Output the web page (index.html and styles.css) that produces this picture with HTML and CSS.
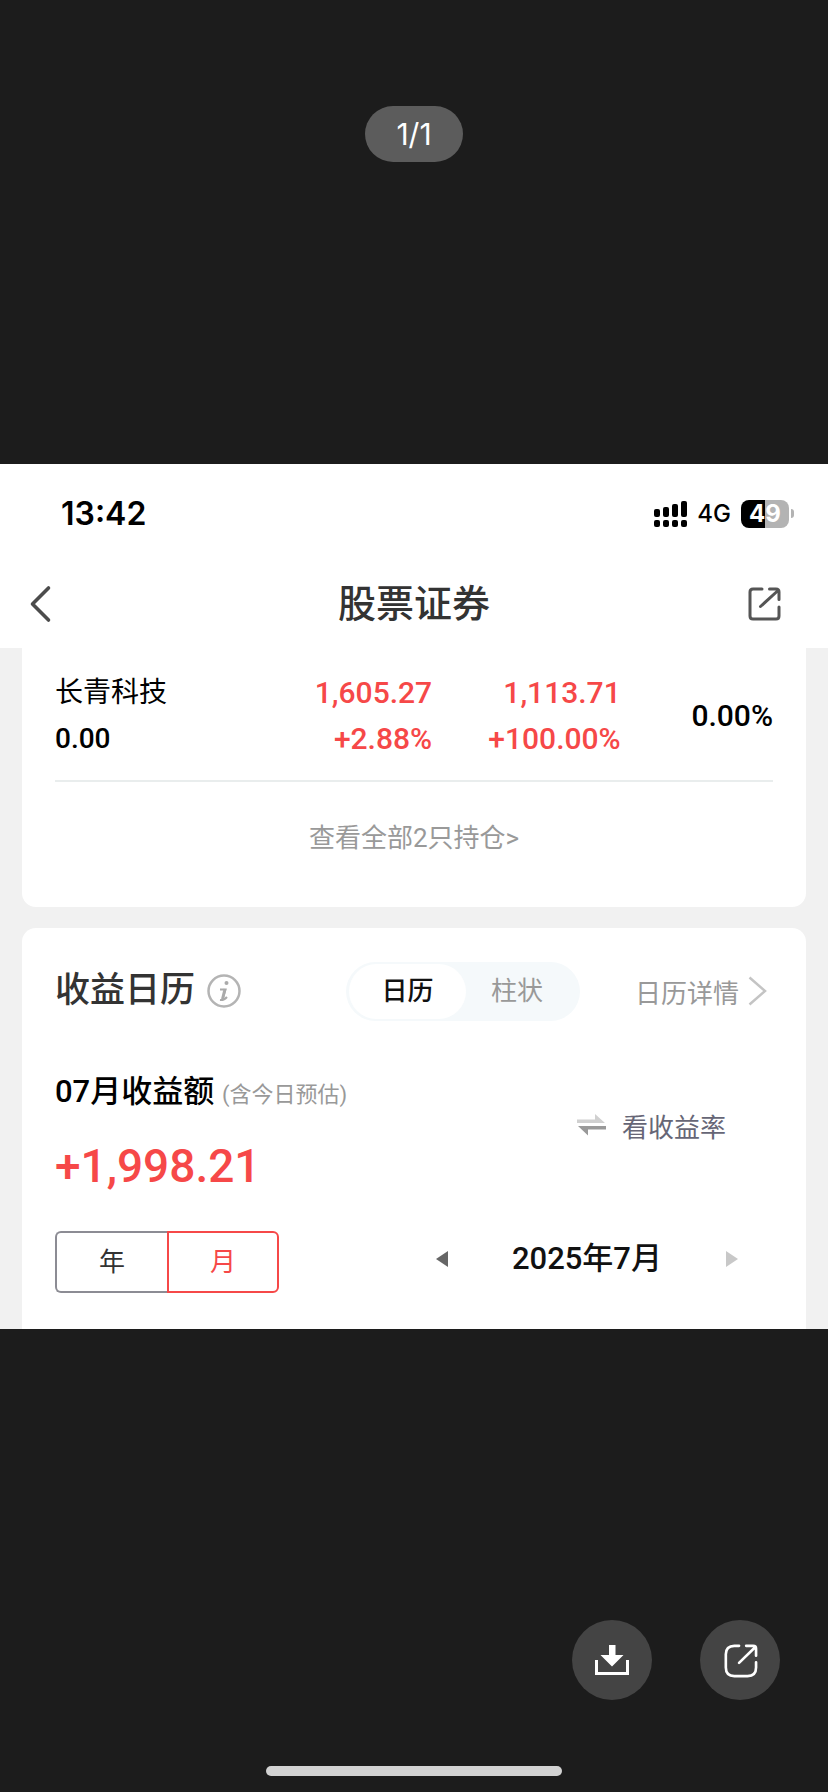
FILE: index.html
```html
<!DOCTYPE html>
<html lang="zh-CN">
    <head>
        <meta charset="utf-8">
        <meta name="viewport" content="width=device-width, initial-scale=1">
        <title>股票证券</title>
        <link rel="stylesheet" href="styles.css">
    </head>
    <body>
        <div class="viewer">
            <div class="viewer-top">
                <span class="counter">1/1</span>
            </div>

            <main class="photo">
                <div class="status-bar">
                    <span class="time">13:42</span>
                    <svg class="signal" width="33" height="28" viewBox="0 0 33 28">
                        <rect x="0" y="9" width="6" height="8" rx="2"/>
                        <rect x="9" y="7" width="6" height="10" rx="2"/>
                        <rect x="18" y="4" width="6" height="13" rx="2"/>
                        <rect x="27" y="1" width="6" height="16" rx="2"/>
                        <rect x="0" y="20" width="6" height="7" rx="2"/>
                        <rect x="9" y="20" width="6" height="7" rx="2"/>
                        <rect x="18" y="20" width="6" height="7" rx="2"/>
                        <rect x="27" y="20" width="6" height="7" rx="2"/>
                    </svg>
                    <span class="network">4G</span>
                    <span class="battery">49</span>
                    <span class="battery-tip"></span>
                </div>

                <header class="nav-bar">
                    <button class="back" aria-label="返回">
                        <svg width="21" height="36" viewBox="0 0 21 36"><path d="M18.500 2L2.500 18L18.500 34" fill="none" stroke="#4c4c4c" stroke-width="3.600" stroke-linecap="round" stroke-linejoin="round"/></svg>
                    </button>
                    <h1>股票证券</h1>
                    <button class="share" aria-label="分享">
                        <svg width="33" height="34" viewBox="0 0 33 34" fill="none" stroke="#555" stroke-width="3" stroke-linecap="round" stroke-linejoin="round">
                            <path d="M14 2H5Q2 2 2 5V29Q2 32 5 32H28Q31 32 31 29V20"/>
                            <path d="M21.500 2H28Q31 2 31 5V12.500M29.500 4L12.500 19.500"/>
                        </svg>
                    </button>
                </header>

                <div class="content">
                    <section class="card holdings">
                        <table>
                            <tr>
                                <td class="stock">长青科技<br><span class="amount">0.00</span></td>
                                <td class="up">1,605.27<br>+2.88%</td>
                                <td class="up">1,113.71<br>+100.00%</td>
                                <td>0.00%</td>
                            </tr>
                        </table>
                        <a class="view-all" href="#">查看全部2只持仓&gt;</a>
                    </section>

                    <section class="card calendar">
                        <div class="card-head">
                            <h2>收益日历</h2>
                            <button aria-label="说明">
                                <svg width="34" height="34" viewBox="0 0 34 34">
                                    <circle cx="17" cy="17" r="15.500" fill="none" stroke="#b4b4b4" stroke-width="2.500"/>
                                    <circle cx="19.500" cy="9" r="2" fill="#aaa"/>
                                    <path d="M13 15.500H18.500L15.500 25.500M13 26Q17 26.500 20 23" fill="none" stroke="#aaa" stroke-width="2"/>
                                    <path d="M18 15L15.500 25" fill="none" stroke="#aaa" stroke-width="3"/>
                                </svg>
                            </button>
                            <div class="switch">
                                <button class="on">日历</button>
                                <button>柱状</button>
                            </div>
                            <a class="detail" href="#">
                                日历详情
                                <svg width="19" height="30" viewBox="0 0 19 30"><path d="M1.500 1.500L17 15L1.500 28.500" fill="none" stroke="#c4c4c4" stroke-width="2.500"/></svg>
                            </a>
                        </div>

                        <div class="summary">
                            <div class="total">
                                <p class="label">07月收益额 <small>(含今日预估)</small></p>
                                <p class="profit">+1,998.21</p>
                            </div>
                            <a class="rate" href="#">
                                <svg width="29" height="24" viewBox="0 0 29 24">
                                    <path d="M0 6.500H18V1L28 10H0Z" fill="#d0d0d0"/>
                                    <path d="M29 13H1L11 22.500V16.500H29Z" fill="#999"/>
                                </svg>
                                看收益率
                            </a>
                        </div>

                        <div class="period">
                            <div class="unit">
                                <button>年</button>
                                <button class="on">月</button>
                            </div>
                            <div class="month">
                                <button aria-label="上个月">
                                    <svg width="12" height="18" viewBox="0 0 12 18"><path d="M12 1V17L0 9Z" fill="#666"/></svg>
                                </button>
                                <span>2025年7月</span>
                                <button aria-label="下个月">
                                    <svg width="12" height="18" viewBox="0 0 12 18"><path d="M0 1V17L12 9Z" fill="#c8c8c8"/></svg>
                                </button>
                            </div>
                        </div>
                    </section>
                </div>
            </main>

            <div class="viewer-bottom">
                <div class="actions">
                    <button aria-label="保存">
                        <svg width="34" height="32" viewBox="0 0 34 32">
                            <path d="M14 1H20.500V11H28.500L17 22.500L5.500 11H14Z" fill="#fff"/>
                            <path d="M1.500 16V29.500H32.500V16" fill="none" stroke="#fff" stroke-width="3"/>
                        </svg>
                    </button>
                    <button aria-label="分享">
                        <svg width="34" height="34" viewBox="0 0 36 34" fill="none" stroke="#fff" stroke-width="2.800" stroke-linecap="round" stroke-linejoin="round">
                            <path d="M17 2H12Q3 2 3 11V25Q3 34 12 34H26Q35 34 35 25V19.500"/>
                            <path d="M24.500 2H32Q35 2 35 5V12.500M34 3.500L17 20"/>
                        </svg>
                    </button>
                </div>
                <div class="home-bar"></div>
            </div>
        </div>
    </body>
</html>
```
FILE: styles.css
```css
*{
    box-sizing:border-box;
}

body{
    margin:0px;
    background-color:#1c1c1c;
    color:#000;
    font-family:Roboto, "Noto Sans CJK SC", sans-serif;
}

h1, h2, p{
    margin:0px;
    font-weight:500;
}

a{
    text-decoration:none;
}

button{
    padding:0px;
    border:0px;
    background:none;
    color:inherit;
    font:inherit;
}

svg{
    display:block;
    overflow:visible;
}

/* photo stays centred between the two dark areas */
.viewer{
    display:grid;
    grid-template-rows:1fr auto 1fr;
    min-height:100vh;
}

.viewer-top{
    padding-top:106px;
    text-align:center;
}

.counter{
    display:inline-block;
    padding:0px 31px;
    border-radius:28px;
    background-color:#5c5c5c;
    color:white;
    font-family:Inter, sans-serif;
    font-size:30px;
    line-height:56px;
}

.photo{
    background-color:#f1f1f1;
}

.status-bar{
    display:flex;
    align-items:center;
    height:100px;
    padding:0px 34px 0px 61px;
    background-color:white;
    font-family:Inter, sans-serif;
}

.time{
    margin-right:auto;
    font-size:32px;
    font-weight:600;
}

.network{
    margin:0px 10px;
    font-size:24px;
    font-weight:500;
}

.battery{
    width:48px;
    border-radius:8px;
    background:linear-gradient(to right, #000 50%, #b3b3b3 50%);
    color:white;
    font-size:24px;
    font-weight:700;
    line-height:28px;
    text-align:center;
}

.battery-tip{
    width:3px;
    height:9px;
    margin-left:2px;
    border-radius:0px 4px 4px 0px;
    background-color:#b3b3b3;
}

.nav-bar{
    display:grid;
    grid-template-columns:1fr auto 1fr;
    align-items:center;
    height:84px;
    padding-bottom:4px;
    background-color:white;
    color:#333;
}

.nav-bar h1{
    font-size:38px;
    line-height:56px;
}

.back{
    justify-self:start;
    margin-left:30px;
}

.share{
    justify-self:end;
    margin-right:47px;
}

.content{
    padding:0px 22px;
}

.card{
    padding:0px 33px;
    background-color:white;
}

.holdings{
    margin-bottom:21px;
    border-radius:0px 0px 14px 14px;
}

.holdings table{
    width:100%;
    table-layout:fixed;
    border-collapse:collapse;
    border-bottom:2px solid #e9eded;
}

.holdings td{
    width:21%;
    padding:22px 0px 18px;
    font-size:30px;
    font-weight:500;
    line-height:46px;
    text-align:right;
}

.holdings td.up{
    width:26%;
    color:#f64848;
}

.holdings td.stock{
    width:26%;
    font-size:28px;
    font-weight:400;
    text-align:left;
}

.amount{
    font-weight:500;
}

.view-all{
    display:block;
    padding:36px 0px 49px;
    color:#999;
    font-size:26px;
    line-height:40px;
    text-align:center;
}

.calendar{
    padding-top:34px;
    padding-bottom:36px;
    border-radius:14px 14px 0px 0px;
}

.card-head{
    display:flex;
    align-items:center;
}

.card-head h2{
    margin-right:12px;
    color:#333;
    font-size:35px;
    line-height:52px;
}

.switch{
    display:flex;
    margin-left:auto;
    padding:2px 12px 2px 3px;
    border-radius:30px;
    background-color:#f5f9fb;
    color:#999;
    font-size:26px;
    line-height:55px;
}

.switch button{
    width:102px;
    border-radius:28px;
}

.switch .on{
    width:117px;
    background-color:white;
    color:#111;
    font-weight:500;
}

.detail{
    display:flex;
    align-items:center;
    gap:9px;
    margin:0px 6px 0px 55px;
    color:#999;
    font-size:26px;
}

.summary{
    display:flex;
    align-items:center;
    justify-content:space-between;
    margin-top:34px;
    padding-right:47px;
}

.total{
    padding-top:14px;
}

.label{
    font-size:31px;
    line-height:46px;
}

.label small{
    color:#999;
    font-size:22px;
    font-weight:400;
}

.profit{
    margin-top:18px;
    color:#f64848;
    font-size:46px;
    line-height:60px;
}

.rate{
    display:flex;
    align-items:center;
    gap:16px;
    color:#666676;
    font-size:26px;
}

.period{
    display:flex;
    align-items:flex-start;
    justify-content:space-between;
    margin-top:35px;
}

.unit{
    display:flex;
    color:#333;
    font-size:26px;
    line-height:58px;
}

.unit button{
    width:112px;
    border:2px solid #8c8c94;
    border-right:0px;
    border-radius:6px 0px 0px 6px;
}

.unit .on{
    border:2px solid #f64848;
    border-radius:0px 6px 6px 0px;
    color:#f64848;
}

.month{
    display:flex;
    align-items:center;
    gap:64px;
    padding-right:35px;
    color:#111;
    font-size:31px;
    font-weight:500;
    line-height:56px;
}

.viewer-bottom{
    display:flex;
    flex-direction:column;
    align-items:center;
    justify-content:flex-end;
    padding-bottom:16px;
}

.actions{
    display:flex;
    gap:48px;
    align-self:flex-end;
    margin:48px 48px 66px;
}

.actions button{
    display:flex;
    align-items:center;
    justify-content:center;
    width:80px;
    height:80px;
    border-radius:50%;
    background-color:#444;
}

.home-bar{
    width:296px;
    height:10px;
    border-radius:5px;
    background-color:#d2d2d2;
}
```
